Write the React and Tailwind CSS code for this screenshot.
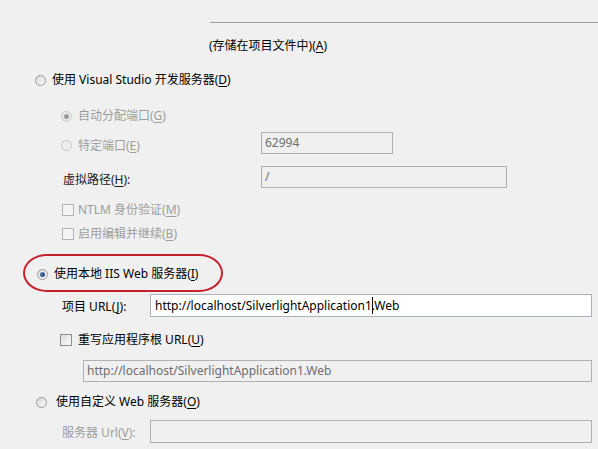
import React from "react";

const U = ({ children }) => <span className="underline underline-offset-2">{children}</span>;

function Radio({ checked = false, disabled = false }) {
  return (
    <span
      className={
        "relative inline-flex h-[11px] w-[11px] shrink-0 items-center justify-center rounded-full border " +
        (disabled ? "border-[#c8c8c8] bg-[#ececec]" : "border-[#9a9a9a] bg-gradient-to-br from-[#d8d8d8] to-[#fafafa]")
      }
    >
      {checked && (
        <span
          className={
            "h-[5px] w-[5px] rounded-full " +
            (disabled ? "bg-[#9a9a9a]" : "bg-gradient-to-br from-[#5b86bf] to-[#1d3e6e]")
          }
        />
      )}
    </span>
  );
}

function Check({ disabled = false }) {
  return (
    <span
      className={
        "inline-block h-[12px] w-[12px] shrink-0 border " +
        (disabled ? "border-[#b4b4b4] bg-[#f4f4f4]" : "border-[#8e8e8e] bg-gradient-to-br from-[#dcdcdc] to-[#fbfbfb]")
      }
    />
  );
}

export default function App() {
  return (
    <div
      className="relative h-[449px] w-[598px] overflow-hidden bg-[#f0f0f0] text-[12px] leading-[16px] text-black"
      style={{ fontFamily: '"Noto Sans", "Noto Sans CJK SC", sans-serif' }}
    >
      <div className="h-[22px]" />
      <div className="ml-[210px] h-px bg-[#a0a0a0]" />
      <div className="mt-[13px] flex h-[20px] items-center pl-[209px]">
        (存储在项目文件中)(<U>A</U>)
      </div>

      {/* D */}
      <div className="mt-[14px] flex h-[20px] items-center pl-[35px]">
        <Radio />
        <span className="ml-[6px]">使用 Visual Studio 开发服务器(<U>D</U>)</span>
      </div>

      {/* G */}
      <div className="mt-[16px] flex h-[20px] items-center pl-[61px] text-[#9d9d9d]">
        <Radio checked disabled />
        <span className="ml-[6px]">自动分配端口(<U>G</U>)</span>
      </div>

      {/* E */}
      <div className="mt-[6px] flex h-[22px] items-center pl-[61px] text-[#9d9d9d]">
        <div className="flex w-[200px] items-center pt-[5px]">
          <Radio disabled />
          <span className="ml-[6px]">特定端口(<U>E</U>)</span>
        </div>
        <div className="flex h-[22px] w-[132px] items-center border border-[#b1b1b1] bg-[#f0f0f0] px-[3px] text-[#6d6d6d]">
          62994
        </div>
      </div>

      {/* H */}
      <div className="mt-[12px] flex h-[22px] items-center pl-[63px]">
        <div className="w-[198px] pt-[5px] text-[#1a1a1a]">
          虚拟路径(<U>H</U>):
        </div>
        <div className="flex h-[22px] w-[246px] items-center border border-[#b1b1b1] bg-[#f0f0f0] px-[3px] text-[#6d6d6d]">
          /
        </div>
      </div>

      {/* M */}
      <div className="mt-[12px] flex h-[20px] items-center pl-[62px] text-[#9d9d9d]">
        <Check disabled />
        <span className="ml-[4px]">NTLM 身份验证(<U>M</U>)</span>
      </div>

      {/* B */}
      <div className="mt-[4px] flex h-[20px] items-center pl-[62px] text-[#9d9d9d]">
        <Check disabled />
        <span className="ml-[4px]">启用编辑并继续(<U>B</U>)</span>
      </div>

      {/* I */}
      <div className="mt-[20px] flex h-[20px] items-center pl-[37px]">
        <Radio checked />
        <span className="ml-[6px]">使用本地 IIS Web 服务器(<U>I</U>)</span>
      </div>

      {/* J */}
      <div className="mt-[10px] flex h-[23px] items-center pl-[62px]">
        <div className="w-[88px] pt-[3px]">
          项目 URL(<U>J</U>):
        </div>
        <div className="flex h-[23px] w-[442px] items-center border border-[#a9b3bf] bg-white px-[4px] text-[12px]">
          http://localhost/SilverlightApplication1
          <span className="relative inline-block w-0">
            <span className="absolute -top-[9px] left-0 h-[17px] w-px bg-black" />
          </span>
          .Web
        </div>
      </div>

      {/* U */}
      <div className="mt-[13px] flex h-[20px] items-center pl-[60px]">
        <Check />
        <span className="ml-[6px]">重写应用程序根 URL(<U>U</U>)</span>
      </div>

      {/* U input */}
      <div className="mt-[10px] flex pl-[83px]">
        <div className="flex h-[22px] w-[509px] items-center border border-[#b1b1b1] bg-[#f0f0f0] px-[3px] text-[#6d6d6d]">
          http://localhost/SilverlightApplication1.Web
        </div>
      </div>

      {/* O */}
      <div className="mt-[10px] flex h-[20px] items-center pl-[36px]">
        <Radio />
        <span className="ml-[9px]">使用自定义 Web 服务器(<U>O</U>)</span>
      </div>

      {/* V */}
      <div className="mt-[8px] flex h-[23px] items-center pl-[62px] text-[#9d9d9d]">
        <div className="w-[88px] pt-[3px]">
          服务器 Url(<U>V</U>):
        </div>
        <div className="h-[23px] w-[442px] border border-[#b1b1b1] bg-[#f0f0f0]" />
      </div>

      {/* red annotation */}
      <div className="pointer-events-none absolute left-[23px] top-[254px] h-[38px] w-[200px] rounded-[24px/19px] border-2 border-[#c4222d]" />
    </div>
  );
}
